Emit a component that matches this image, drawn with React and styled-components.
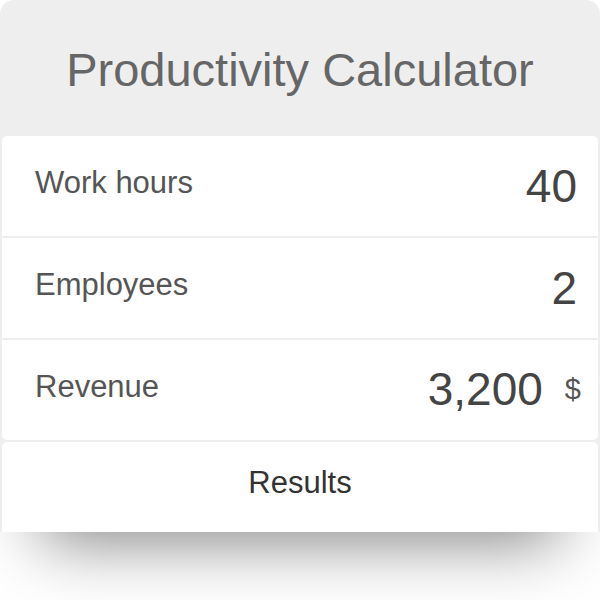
import React from 'react';
import styled, {createGlobalStyle} from 'styled-components';

const GlobalStyle = createGlobalStyle`
  html, body {
    margin: 0;
    padding: 0;
    background: #ffffff;
  }
  body {
    font-family: "Liberation Sans", Arial, sans-serif;
  }
`;

const Page = styled.div`
  width: 600px;
  height: 600px;
  overflow: hidden;
`;

const Widget = styled.div`
  width: 600px;
  height: 532px;
  box-sizing: border-box;
  padding: 0 2px;
  background: #eeeeee;
  border-radius: 14px 14px 0 0;
  overflow: hidden;
  box-shadow: 0 50px 64px -42px rgba(0, 0, 0, 0.5);
`;

const Header = styled.div`
  height: 136px;
  display: flex;
  align-items: center;
  justify-content: center;
  padding-top: 2px;
  box-sizing: border-box;
`;

const Title = styled.h1`
  margin: 0;
  font-weight: normal;
  font-size: 47px;
  color: #666666;
`;

const Card = styled.div`
  border-radius: 5px;
  display: flex;
  flex-direction: column;
  gap: 2px;
  background: #efefef;
  overflow: hidden;
`;

const Row = styled.div`
  height: 100px;
  background: #ffffff;
  display: flex;
  align-items: center;
  justify-content: space-between;
  padding: 0 17px 0 33px;
`;

const Label = styled.span`
  font-size: 31px;
  color: #555555;
  margin-bottom: 7px;
`;

const ValueGroup = styled.div`
  display: flex;
  align-items: center;
  margin-bottom: ${(p) => (p.$unit ? '2px' : '0')};
`;

const Value = styled.span`
  font-size: 46px;
  color: #444444;
  margin-right: ${(p) => (p.$unit ? '0' : '4px')};
`;

const Unit = styled.span`
  font-size: 29px;
  color: #555555;
  margin-left: 22px;
`;

const Results = styled.div`
  margin-top: 2px;
  height: 120px;
  background: #ffffff;
  border-radius: 5px;
  text-align: center;
  padding-top: 23px;
  box-sizing: border-box;
  font-size: 31px;
  color: #333333;
`;

const fields = [
  {label: 'Work hours', value: '40'},
  {label: 'Employees', value: '2'},
  {label: 'Revenue', value: '3,200', unit: '$'},
];

const App = () => {
  return (
    <Page>
      <GlobalStyle />
      <Widget>
        <Header>
          <Title>Productivity Calculator</Title>
        </Header>
        <Card>
          {fields.map((f) => (
            <Row key={f.label}>
              <Label>{f.label}</Label>
              <ValueGroup $unit={!!f.unit}>
                <Value $unit={!!f.unit}>{f.value}</Value>
                {f.unit && <Unit>{f.unit}</Unit>}
              </ValueGroup>
            </Row>
          ))}
        </Card>
        <Results>Results</Results>
      </Widget>
    </Page>
  );
};

export default App;
